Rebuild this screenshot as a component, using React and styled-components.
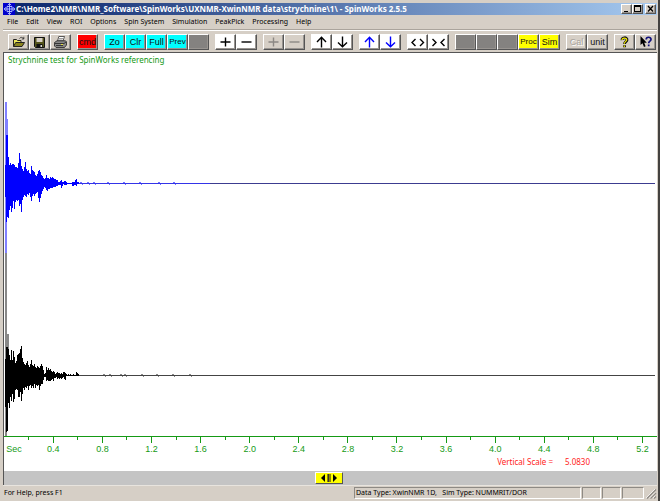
import React from "react";
import styled, { createGlobalStyle, css } from "styled-components";

const GlobalStyle = createGlobalStyle`
  * { box-sizing: border-box; }
  body { margin: 0; background: #d6cfc6; }
`;

const uiFont = css`
  font-family: "Noto Sans", "Open Sans", sans-serif;
  font-size: 7px;
  line-height: 12px;
`;

const raised = css`
  border: 1px solid;
  border-color: #fff #555 #555 #fff;
  box-shadow: inset -1px -1px 0 #989490;
`;

const Window = styled.main`
  display: flex;
  flex-direction: column;
  min-height: 100vh;
  padding: 3px 1px 1px 3px;
  background: #d6cfc6;
  border-right: 2px solid #444240;
  border-bottom: 1px solid #444240;
  ${uiFont}
  color: #000;
`;

const TitleBar = styled.header`
  display: flex;
  align-items: center;
  height: 12px;
  padding-right: 1px;
  background: linear-gradient(90deg, #0a246a, #a6caf0);
`;

const Title = styled.h1`
  flex: 1;
  margin: 0 0 0 1px;
  font-family: "Noto Sans", "Open Sans", sans-serif;
  font-size: 8px;
  line-height: 12px;
  font-weight: 700;
  color: #fff;
  white-space: nowrap;
  overflow: hidden;
`;

const CaptionButton = styled.button`
  display: flex;
  width: 11px;
  height: 10px;
  padding: 0;
  margin-left: ${(p) => (p.$apart ? "2px" : "0")};
  background: #d6cfc6;
  ${raised}
`;

const MenuBar = styled.nav`
  display: flex;
  gap: 8px;
  height: 15px;
  padding: 1px 4px;
  border-bottom: 1px solid #aaa49c;
`;

const MenuButton = styled.button`
  padding: 0;
  border: 0;
  background: none;
  color: #000;
  white-space: nowrap;
  ${uiFont}
`;

const Toolbar = styled.div`
  display: flex;
  gap: 6px;
  height: 22px;
  padding: 3px 0 2px 5px;
  border-top: 1px solid #fff;
  overflow: hidden;
`;

const ToolGroup = styled.div`
  display: flex;
  flex: none;
`;

const ToolButton = styled.button`
  display: flex;
  align-items: center;
  justify-content: center;
  width: 21px;
  height: 16px;
  padding: 0;
  background: ${(p) => p.$fill || "#d6cfc6"};
  color: #111;
  font-family: "Liberation Sans", Arial, sans-serif;
  font-size: ${(p) => (p.$small ? "8px" : "9px")};
  line-height: 12px;
  ${raised}

  &:disabled {
    color: #a8a49e;
    text-shadow: 1px 1px 0 #fff;
  }
`;

const Client = styled.section`
  display: flex;
  flex: 1;
  flex-direction: column;
  background: #fff;
  border-top: 1px solid #555;
  border-left: 1px solid #555;
  font-size: 8px;
  line-height: 12px;
`;

const Caption = styled.h2`
  margin: 0;
  padding: 1px 0 1px 4px;
  font-size: 8px;
  font-weight: 400;
  line-height: 12px;
  color: #159a15;
`;

const Waveforms = styled.svg`
  display: block;
  flex: 1;
  width: 100%;
  height: 0;
  min-height: 200px;
`;

const Axis = styled.svg`
  display: block;
  width: 100%;
  height: 20px;
  stroke: #159a15;
  text {
    fill: #159a15;
    stroke: none;
    text-anchor: middle;
    font-family: "Liberation Sans", Arial, sans-serif;
    font-size: 9px;
  }
`;

const ScaleReadout = styled.p`
  display: flex;
  justify-content: flex-end;
  gap: 12px;
  margin: 0;
  padding: 0 67px 3px 0;
  color: #f22;
`;

const ScrollStrip = styled.div`
  display: flex;
  justify-content: center;
  padding: 1px 3px 1px 0;
  background: #c4c4c4;
`;

const ScrollButton = styled.button`
  display: flex;
  align-items: center;
  justify-content: center;
  width: 28px;
  height: 12px;
  padding: 0;
  background: #ff0;
  ${raised}
  box-shadow: none;
`;

const StatusBar = styled.footer`
  display: flex;
  align-items: center;
  gap: 1px;
  height: 16px;
  padding-bottom: 1px;
  border-top: 1px solid #e8e4de;
`;

const StatusText = styled.span`
  flex: 1;
  padding-left: 1px;
`;

const StatusPane = styled.span`
  width: ${(p) => p.$width}px;
  height: 12px;
  padding-left: 1px;
  border: 1px solid;
  border-color: #8e8a84 #fff #fff #8e8a84;
  line-height: 10px;
  white-space: pre;
`;

const Icon = styled.svg`
  display: block;
  flex: none;
  overflow: visible;
`;

const BLUE = [
  [18, 13], [48, 38], [48, 33], [26, 34], [18, 26], [20, 22], [18, 28], [19, 24], [19, 17], [18, 25],
  [16, 18], [16, 16], [15, 17], [20, 16], [30, 22], [24, 20], [17, 28], [14, 16], [12, 13], [16, 11],
  [21, 12], [14, 13], [12, 10], [13, 11], [10, 9], [9, 13], [17, 17], [13, 12], [12, 10], [11, 12],
  [8, 10], [7, 9], [9, 8], [12, 14], [13, 18], [11, 14], [8, 10], [7, 7], [5, 5], [4, 3],
  [5, 4], [8, 6], [5, 7], [5, 5], [4, 5], [6, 4], [5, 4], [6, 4], [5, 3], [4, 3],
  [4, 3], [3, 2], [3, 2], [1, 1], [1, 1], [2, 1], [3, 4], [1, 2], [1, 0], [2, 1],
  [2, 1], [1, 1], [0, 0], [0, 0], [0, 0], [0, 0], [0, 0], [1, 2], [1, 2], [1, 1],
  [3, 1], [4, 2], [1, 0], [1, 0],
];

const BLACK = [
  [16, 30], [28, 55], [28, 54], [26, 26], [20, 31], [15, 20], [25, 24], [15, 18], [24, 25], [18, 22],
  [12, 14], [14, 13], [20, 14], [21, 20], [22, 20], [26, 16], [29, 24], [17, 18], [13, 12], [11, 14],
  [10, 11], [12, 12], [14, 10], [10, 14], [8, 10], [11, 9], [15, 12], [10, 10], [9, 12], [11, 8],
  [8, 12], [7, 9], [9, 10], [8, 9], [7, 14], [9, 10], [11, 8], [9, 8], [5, 4], [1, 1],
  [2, 1], [8, 5], [5, 4], [7, 5], [5, 5], [6, 5], [4, 4], [3, 3], [4, 5], [3, 2],
  [1, 2], [2, 1], [3, 3], [2, 2], [2, 3], [1, 2], [2, 3], [1, 2], [3, 1], [3, 3],
  [2, 4], [1, 0], [0, 0], [1, 0], [0, 0], [1, 0], [0, 0], [0, 0], [1, 0], [0, 0],
  [0, 0], [3, 0], [2, 0], [1, 0],
];

const tracePath = (samples, base) =>
  samples.map(([up, down], i) => `M${i + 5} ${base - up}h1V${base + down + 1}h-1z`).join("");

const ripplePath = (spots, base) =>
  spots.map((x) => `M${x} ${base - 1}h2v1h-2zM${x + 2} ${base + 1}h1v1h-1z`).join("");

function Plot() {
  return (
    <Waveforms viewBox="4 67 652 368" preserveAspectRatio="none" shapeRendering="crispEdges" role="img" aria-label="Free induction decays">
      <path d="M5 102h2v151h-2zM7 119h1v40h-1z" fill="#8080ff" />
      <path d="M5 253h2v182h-2zM7 334h2v40h-2z" fill="#888" />
      <path d="M5 183H654v1H5z" fill="#3c3c90" />
      <path d="M5 183H210v1H5z" fill="#3434e8" />
      <path d={tracePath(BLUE, 183)} fill="#00f" />
      <path d={ripplePath([80, 87, 93, 107, 123, 139, 158, 173], 183)} fill="#7070ff" />
      <path d="M5 375H654v1H5z" fill="#444" />
      <path d={tracePath(BLACK, 375)} fill="#000" />
      <path d={ripplePath([103, 109, 120, 124, 141, 156, 172, 189], 375)} fill="#888" />
    </Waveforms>
  );
}

const percent = (sec) => `${((49.25 + (sec - 0.4) * 122.55) / 652) * 100}%`;

function TimeAxis() {
  const majors = Array.from({ length: 13 }, (_, i) => (i + 1) * 0.4);
  return (
    <Axis>
      <g shapeRendering="crispEdges">
        <line x1="0" x2="100%" y1="0.5" y2="0.5" />
        {majors.map((s) => (
          <React.Fragment key={s}>
            <line x1={percent(s)} x2={percent(s)} y1="0" y2="7" />
            <line x1={percent(s - 0.2)} x2={percent(s - 0.2)} y1="0" y2="4" />
          </React.Fragment>
        ))}
      </g>
      <text x="10" y="16">Sec</text>
      {majors.map((s) => (
        <text key={s} x={percent(s)} y="16">{s.toFixed(1)}</text>
      ))}
    </Axis>
  );
}

const Stroke = ({ d, color = "#000" }) => (
  <Icon width="13" height="12" viewBox="0 0 13 12" fill="none" stroke={color} strokeWidth="1.4">
    <path d={d} />
  </Icon>
);

const PLUS = "M1.5 6h10M6.5 1.5v9";
const MINUS = "M1.5 6h10";
const UP = "M6.5 11.5V1M2 6l4.5-4.7L11 6";
const DOWN = "M6.5 .5V11M2 6.5l4.5 4.2L11 6.5";

const OpenIcon = () => (
  <Icon width="12" height="12" viewBox="0 0 12 12">
    <path d="M.5 10.500V3.500h3l1 1h3.500v2" fill="#e8e45a" stroke="#222" />
    <path d="M.5 10.500l2.200-4h8.800l-2.500 4z" fill="#8a8420" stroke="#222" />
    <path d="M6.500 2.500c1-1.500 3-1.500 4 .2M10.800.8v2.200H8.800" fill="none" stroke="#222" strokeWidth=".8" />
  </Icon>
);
const SaveIcon = () => (
  <Icon width="11" height="11" viewBox="0 0 11 11">
    <path d="M.5.5h10v10H1.500l-1-1z" fill="#55551c" stroke="#111" />
    <path d="M2.500 1h6v4h-6z" fill="#d6cfc6" />
    <path d="M2.500 7h6v4h-6z" fill="#111" />
    <path d="M6.500 8h1.500v2H6.500z" fill="#ddd" />
  </Icon>
);
const PrintIcon = () => (
  <Icon width="13" height="12" viewBox="0 0 13 12">
    <path d="M3.500 5l1.300-4.500h5.700L9 5z" fill="#fff" stroke="#333" strokeWidth=".8" />
    <path d="M5 2.500h4M4.500 4h4" stroke="#555" strokeWidth=".6" />
    <path d="M.5 6.500L3 4.800h8.500l1 1V9l-2 2.500H2L.5 10z" fill="#888" stroke="#222" strokeWidth=".8" />
    <path d="M1 7.500h9l2-1.500M2 9.500h7" stroke="#222" strokeWidth=".8" fill="none" />
    <path d="M7 8h2v1H7z" fill="#e6e040" />
  </Icon>
);
const HelpIcon = () => (
  <Icon width="9" height="12" viewBox="0 0 9 12" fill="none">
    <path d="M2 4.200C1.800 1 7.300 1 7 4c-.2 1.600-2.500 1.800-2.500 4M4.500 9.200v2" stroke="#111" strokeWidth="2.800" />
    <path d="M2 4C2 1.500 6.800 1.500 6.700 3.800c-.2 1.400-2.400 1.900-2.400 4M4.300 9.400v1.500" stroke="#f0e800" strokeWidth="1.200" />
  </Icon>
);
const ContextHelpIcon = () => (
  <Icon width="12" height="12" viewBox="0 0 12 12">
    <path d="M.5 0v9l2-1.800L4 11l1.600-.7L4.200 6.800h2.600z" fill="#000" />
    <path d="M6.200 3.500c0-3 5-3 4.800 0-.1 1.700-2.300 1.700-2.300 3.700M8.700 8.500v1.800" fill="none" stroke="#10107c" strokeWidth="1.700" />
  </Icon>
);

const white = "#fff";
const grey = "#848280";
const groups = [
  [
    { name: "Open", icon: <OpenIcon /> },
    { name: "Save", icon: <SaveIcon /> },
    { name: "Print", icon: <PrintIcon /> },
  ],
  [{ text: "cmd", fill: "#f00" }],
  [
    { text: "Zo", fill: "#0ff" },
    { text: "Clr", fill: "#0ff" },
    { text: "Full", fill: "#0ff" },
    { text: "Prev", fill: "#0ff", small: true },
    { name: "Blank 1", fill: grey },
  ],
  [
    { name: "Increase", fill: white, icon: <Stroke d={PLUS} /> },
    { name: "Decrease", fill: white, icon: <Stroke d={MINUS} /> },
  ],
  [
    { name: "Add", disabled: true, icon: <Stroke d={PLUS} color="#8c8884" /> },
    { name: "Subtract", disabled: true, icon: <Stroke d={MINUS} color="#8c8884" /> },
  ],
  [
    { name: "Move up", fill: white, icon: <Stroke d={UP} /> },
    { name: "Move down", fill: white, icon: <Stroke d={DOWN} /> },
  ],
  [
    { name: "Trace up", fill: white, icon: <Stroke d={UP} color="#00f" /> },
    { name: "Trace down", fill: white, icon: <Stroke d={DOWN} color="#00f" /> },
  ],
  [
    { name: "Expand", fill: white, icon: <Stroke d="M4.500 3L1 6.500 4.500 10M9 3l3.500 3.500L9 10" /> },
    { name: "Contract", fill: white, icon: <Stroke d="M.5 3L4 6.500.5 10M12.500 3L9 6.500l3.500 3.500" /> },
  ],
  [
    { name: "Blank 2", fill: grey },
    { name: "Blank 3", fill: grey },
    { name: "Blank 4", fill: grey },
    { text: "Proc", fill: "#ff0", small: true },
    { text: "Sim", fill: "#ff0" },
  ],
  [{ text: "Cal", disabled: true }, { text: "unit" }],
  [
    { name: "Help", icon: <HelpIcon /> },
    { name: "Context help", icon: <ContextHelpIcon /> },
  ],
];

const menus = ["File", "Edit", "View", "ROI", "Options", "Spin System", "Simulation", "PeakPick", "Processing", "Help"];

export default function App() {
  return (
    <>
      <GlobalStyle />
      <Window>
        <TitleBar>
          <Icon width="12" height="12" viewBox="0 0 12 12">
            <path d="M0 0h12v12H0z" fill="#00c" />
            <path d="M6.500.5v11M1 6h11M4.800 2.200L6.500.5l1.700 1.700M4.800 9.800l1.700 1.700 1.700-1.700M3 4.200L1.200 6 3 7.800M10 4.200L11.800 6 10 7.800M4 3.500h5v5H4z" fill="none" stroke="#b8c4ff" strokeWidth=".9" />
          </Icon>
          <Title>{"C:\\Home2\\NMR\\NMR_Software\\SpinWorks\\UXNMR-XwinNMR data\\strychnine\\1\\ - SpinWorks 2.5.5"}</Title>
          <CaptionButton aria-label="Minimize">
            <Icon width="9" height="8"><path d="M2 6h4v1H2z" /></Icon>
          </CaptionButton>
          <CaptionButton aria-label="Maximize">
            <Icon width="9" height="8"><path d="M1 0h7v7H1zM2 2v4h5V2z" fillRule="evenodd" /></Icon>
          </CaptionButton>
          <CaptionButton aria-label="Close" $apart>
            <Icon width="9" height="8"><path d="M2 1l5 5.500M7 1L2 6.500" stroke="#000" strokeWidth="1.300" /></Icon>
          </CaptionButton>
        </TitleBar>
        <MenuBar>
          {menus.map((m) => (
            <MenuButton key={m}>{m}</MenuButton>
          ))}
        </MenuBar>
        <Toolbar role="toolbar">
          {groups.map((items, g) => (
            <ToolGroup key={g}>
              {items.map((t) => (
                <ToolButton key={t.text || t.name} $fill={t.fill} $small={t.small} disabled={t.disabled} aria-label={t.name}>
                  {t.text || t.icon}
                </ToolButton>
              ))}
            </ToolGroup>
          ))}
        </Toolbar>
        <Client>
          <Caption>Strychnine test for SpinWorks referencing</Caption>
          <Plot />
          <TimeAxis />
          <ScaleReadout>
            <span>Vertical Scale =</span>
            <span>5.0830</span>
          </ScaleReadout>
          <ScrollStrip>
            <ScrollButton aria-label="Scroll">
              <Icon width="18" height="8" viewBox="0 0 18 8">
                <path d="M5 0v8L1 4zM13 0v8l4-4z" />
                <path d="M7 0h4v8H7z" fill="#8a8400" />
                <path d="M8 0h1v8H8z" fill="#333" />
              </Icon>
            </ScrollButton>
          </ScrollStrip>
        </Client>
        <StatusBar>
          <StatusText>For Help, press F1</StatusText>
          <StatusPane $width={227}>{"Data Type: XwinNMR 1D,   Sim Type: NUMMRIT/DOR"}</StatusPane>
          <StatusPane $width={19} />
          <StatusPane $width={19} />
          <StatusPane $width={22} />
          <Icon width="12" height="12" viewBox="0 0 12 12">
            <path d="M2 11.500l9-9M5.500 11.500l5.500-5.500M9 11.500l2-2" stroke="#8e8a84" strokeWidth="1.300" />
            <path d="M1 11l9-9M4.500 11L10 5.500M8 11l2-2" stroke="#fff" strokeWidth=".7" />
          </Icon>
        </StatusBar>
      </Window>
    </>
  );
}
